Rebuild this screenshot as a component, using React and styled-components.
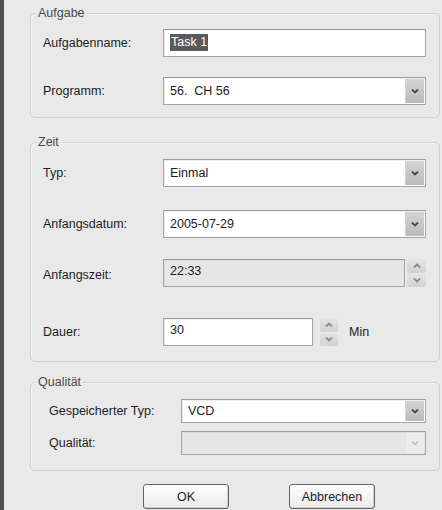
import React from 'react'
import styled, { createGlobalStyle } from 'styled-components'

const Global = createGlobalStyle`
    html, body {
        margin: 0;
        padding: 0;
        background: #e9e9e9;
    }
    body {
        font-family: "Liberation Sans", Arial, sans-serif;
        font-size: 12.5px;
        color: #1c1c1c;
    }
`

const Window = styled.div`
    width: 442px;
    height: 510px;
    display: flex;
    overflow: hidden;
    background: #e9e9e9;
    border-left: 4px solid #4f4f4f;
    box-sizing: border-box;
`
const Content = styled.div`
    flex: 1;
    display: flex;
    flex-direction: column;
    padding: 0 2px 0 26px;
`
const Group = styled.div`
    position: relative;
    margin-top: ${props => props.$mt}px;
    padding: ${props => props.$pad};
    border: 1px solid #d0d0d0;
    border-radius: 5px;
    box-shadow: inset 1px 1px 0 #f4f4f4;
`
const GroupTitle = styled.span`
    position: absolute;
    top: -8px;
    left: 5px;
    padding: 0 2px;
    line-height: 14px;
    background: #e9e9e9;
    color: #4a4a4a;
`
const Row = styled.div`
    display: grid;
    grid-template-columns: ${props => props.$labelW}px 1fr;
    align-items: center;
    margin-top: ${props => props.$mt || 0}px;
    height: ${props => props.$h || 28}px;
`
const Label = styled.span`
    color: #1c1c1c;
    padding-top: ${props => props.$dy || 0}px;
`
const Field = styled.div`
    display: flex;
    align-items: center;
    height: 100%;
`
const Box = styled.div`
    flex: ${props => (props.$w ? 'none' : 1)};
    width: ${props => (props.$w ? props.$w + 'px' : 'auto')};
    height: 100%;
    box-sizing: border-box;
    display: flex;
    align-items: ${props => (props.$top ? 'flex-start' : 'center')};
    border: 1px solid #a4a4a4;
    border-top-color: #9a9a9a;
    background: ${props => (props.$disabled ? '#e6e6e6' : '#ffffff')};
    box-shadow: inset 1px 1px 0 ${props => (props.$disabled ? '#dcdcdc' : '#f0f0f0')};
`
const BoxText = styled.span`
    flex: 1;
    padding: ${props => (props.$top ? '4px' : '0')} 0 0 6px;
    white-space: pre;
`
const Selected = styled.span`
    display: inline-block;
    background: #5a5a5a;
    color: #ffffff;
    padding: 1px 1px 2px;
    line-height: 14px;
`
const DropBtn = styled.div`
    width: 18px;
    align-self: stretch;
    margin: 1px;
    display: flex;
    align-items: center;
    justify-content: center;
    background: ${props => (props.$disabled
        ? '#ececec'
        : 'linear-gradient(#d4d4d4, #bababa)')};
    border-left: 1px solid ${props => (props.$disabled ? '#e4e4e4' : '#cfcfcf')};
`
const Spin = styled.div`
    width: ${props => props.$w}px;
    height: 100%;
    margin-left: ${props => props.$ml}px;
    display: flex;
    flex-direction: column;
    gap: 1px;
`
const SpinHalf = styled.div`
    flex: 1;
    display: flex;
    align-items: center;
    justify-content: center;
    background: linear-gradient(#e4e4e4, #d2d2d2);
    border-radius: 2px;
`
const Unit = styled.span`
    margin-left: 11px;
`
const ButtonRow = styled.div`
    display: flex;
    gap: 60px;
    margin-top: 13px;
    padding-left: 113px;
`
const Button = styled.button`
    width: 86px;
    height: 25px;
    font-family: "Liberation Sans", Arial, sans-serif;
    font-size: 12.5px;
    color: #1c1c1c;
    border: 1px solid #656565;
    border-radius: 3px;
    background: linear-gradient(#fdfdfd, #ebebeb);
    box-shadow: inset -1px -1px 0 #cfcfcf;
    padding: 0;
`

const Chevron = ({ up, color }) => (
    <svg width="8" height="5" viewBox="0 0 8 5">
        <polyline
            points={up ? '1,4.5 4,1.5 7,4.5' : '1,0.5 4,3.5 7,0.5'}
            fill="none"
            stroke={color}
            strokeWidth="1.8"
        />
    </svg>
)

const Combo = ({ value, disabled }) => (
    <Box $disabled={disabled}>
        <BoxText>{value}</BoxText>
        <DropBtn $disabled={disabled}>
            <Chevron color={disabled ? '#c4c4c4' : '#474747'} />
        </DropBtn>
    </Box>
)

const Spinner = ({ w, ml }) => (
    <Spin $w={w} $ml={ml}>
        <SpinHalf><Chevron up color="#8a8a8a" /></SpinHalf>
        <SpinHalf><Chevron color="#8a8a8a" /></SpinHalf>
    </Spin>
)

const App = () => {
    return (
        <Window>
            <Global />
            <Content>
                <Group $mt={13} $pad="15px 13px 12px 12px">
                    <GroupTitle>Aufgabe</GroupTitle>
                    <Row $labelW={120}>
                        <Label>Aufgabenname:</Label>
                        <Field>
                            <Box $top>
                                <BoxText $top><Selected>Task 1</Selected></BoxText>
                            </Box>
                        </Field>
                    </Row>
                    <Row $labelW={120} $mt={20}>
                        <Label>Programm:</Label>
                        <Field><Combo value="56.  CH 56" /></Field>
                    </Row>
                </Group>

                <Group $mt={24} $pad="16px 13px 15px 12px">
                    <GroupTitle>Zeit</GroupTitle>
                    <Row $labelW={120}>
                        <Label>Typ:</Label>
                        <Field><Combo value="Einmal" /></Field>
                    </Row>
                    <Row $labelW={120} $mt={23}>
                        <Label>Anfangsdatum:</Label>
                        <Field><Combo value="2005-07-29" /></Field>
                    </Row>
                    <Row $labelW={120} $mt={21}>
                        <Label $dy={4}>Anfangszeit:</Label>
                        <Field>
                            <Box $disabled $top><BoxText $top>22:33</BoxText></Box>
                            <Spinner w={19} ml={2} />
                        </Field>
                    </Row>
                    <Row $labelW={120} $mt={31}>
                        <Label>Dauer:</Label>
                        <Field>
                            <Box $w={150} $top><BoxText $top>30</BoxText></Box>
                            <Spinner w={18} ml={7} />
                            <Unit>Min</Unit>
                        </Field>
                    </Row>
                </Group>

                <Group $mt={20} $pad="16px 13px 15px 18px">
                    <GroupTitle>Qualität</GroupTitle>
                    <Row $labelW={132} $h={24}>
                        <Label>Gespeicherter Typ:</Label>
                        <Field><Combo value="VCD" /></Field>
                    </Row>
                    <Row $labelW={132} $h={24} $mt={8}>
                        <Label>Qualität:</Label>
                        <Field><Combo value="" disabled /></Field>
                    </Row>
                </Group>

                <ButtonRow>
                    <Button>OK</Button>
                    <Button>Abbrechen</Button>
                </ButtonRow>
            </Content>
        </Window>
    )
}

export default App
